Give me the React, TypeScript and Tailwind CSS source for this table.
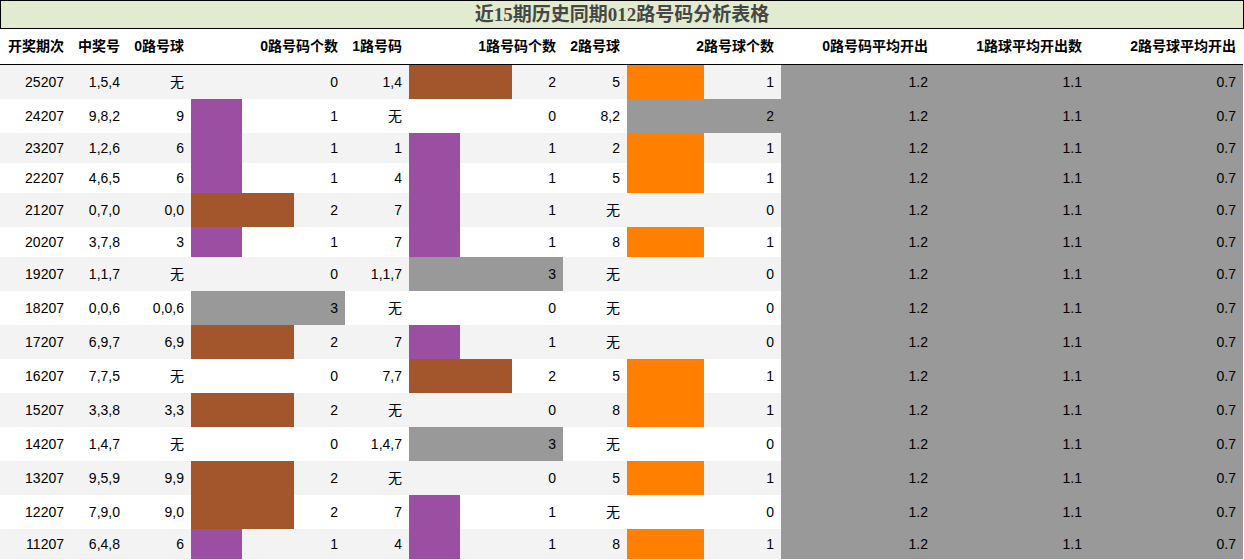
import React from "react";

type Row = {
  qi: string;
  win: string;
  b0: string;
  c0: number;
  b1: string;
  c1: number;
  b2: string;
  c2: number;
};

const rows: Row[] = [
  { qi: "25207", win: "1,5,4", b0: "无", c0: 0, b1: "1,4", c1: 2, b2: "5", c2: 1 },
  { qi: "24207", win: "9,8,2", b0: "9", c0: 1, b1: "无", c1: 0, b2: "8,2", c2: 2 },
  { qi: "23207", win: "1,2,6", b0: "6", c0: 1, b1: "1", c1: 1, b2: "2", c2: 1 },
  { qi: "22207", win: "4,6,5", b0: "6", c0: 1, b1: "4", c1: 1, b2: "5", c2: 1 },
  { qi: "21207", win: "0,7,0", b0: "0,0", c0: 2, b1: "7", c1: 1, b2: "无", c2: 0 },
  { qi: "20207", win: "3,7,8", b0: "3", c0: 1, b1: "7", c1: 1, b2: "8", c2: 1 },
  { qi: "19207", win: "1,1,7", b0: "无", c0: 0, b1: "1,1,7", c1: 3, b2: "无", c2: 0 },
  { qi: "18207", win: "0,0,6", b0: "0,0,6", c0: 3, b1: "无", c1: 0, b2: "无", c2: 0 },
  { qi: "17207", win: "6,9,7", b0: "6,9", c0: 2, b1: "7", c1: 1, b2: "无", c2: 0 },
  { qi: "16207", win: "7,7,5", b0: "无", c0: 0, b1: "7,7", c1: 2, b2: "5", c2: 1 },
  { qi: "15207", win: "3,3,8", b0: "3,3", c0: 2, b1: "无", c1: 0, b2: "8", c2: 1 },
  { qi: "14207", win: "1,4,7", b0: "无", c0: 0, b1: "1,4,7", c1: 3, b2: "无", c2: 0 },
  { qi: "13207", win: "9,5,9", b0: "9,9", c0: 2, b1: "无", c1: 0, b2: "5", c2: 1 },
  { qi: "12207", win: "7,9,0", b0: "9,0", c0: 2, b1: "7", c1: 1, b2: "无", c2: 0 },
  { qi: "11207", win: "6,4,8", b0: "6", c0: 1, b1: "4", c1: 1, b2: "8", c2: 1 },
];

const headers = [
  "开奖期次",
  "中奖号",
  "0路号球",
  "0路号码个数",
  "1路号码",
  "1路号码个数",
  "2路号球",
  "2路号球个数",
  "0路号码平均开出",
  "1路球平均开出数",
  "2路号球平均开出",
];

const gridCols =
  "grid grid-cols-[71px_56px_64px_154px_64px_154px_64px_154px_154px_154px_154px] w-[1243px]";

// 0路 / 1路 bars: 1 purple, 2 brown, 3 grey (max 3)
function barClass012(n: number) {
  if (n === 1) return "bg-[#9b4fa3]";
  if (n === 2) return "bg-[#a3552b]";
  return "bg-[#999999]";
}

// 2路 bars: 1 orange, 2 grey (max 2)
function barClass2(n: number) {
  if (n === 1) return "bg-[#ff8000]";
  return "bg-[#999999]";
}

function Cell({ children }: { children: React.ReactNode }) {
  return <div className="flex items-center justify-end pr-[7px] whitespace-nowrap">{children}</div>;
}

function BarCell({ value, max, color }: { value: number; max: number; color: string }) {
  return (
    <div className="relative flex items-center justify-end pr-[7px]">
      {value > 0 && (
        <div className={`absolute left-0 top-0 bottom-0 ${color}`} style={{ width: `${(value / max) * 100}%` }} />
      )}
      <span className="relative">{value}</span>
    </div>
  );
}

export default function App() {
  return (
    <div className="w-[1244px] h-[560px] bg-white text-[14px] text-black font-['Liberation_Sans','Noto_Sans_CJK_SC',sans-serif] overflow-hidden">
      <div className="h-[29px] border border-black bg-[#e2ebcf] flex items-center justify-center">
        <h1 className="text-[19px] leading-[27px] font-bold text-[#474747] font-['Liberation_Serif','Noto_Sans_CJK_SC',serif]">
          近15期历史同期012路号码分析表格
        </h1>
      </div>

      <div className={`${gridCols} h-[36px] border-b border-black bg-white font-bold text-black`}>
        {headers.map((h) => (
          <Cell key={h}>{h}</Cell>
        ))}
      </div>

      {rows.map((r, i) => {
        const tall = [r.b0, r.b1, r.b2].includes("无");
        return (
          <div
            key={r.qi}
            className={`${gridCols} ${tall ? "h-[34px]" : "h-[30px]"} ${i % 2 === 0 ? "bg-[#f3f3f3]" : "bg-white"}`}
          >
            <Cell>{r.qi}</Cell>
            <Cell>{r.win}</Cell>
            <Cell>{r.b0}</Cell>
            <BarCell value={r.c0} max={3} color={barClass012(r.c0)} />
            <Cell>{r.b1}</Cell>
            <BarCell value={r.c1} max={3} color={barClass012(r.c1)} />
            <Cell>{r.b2}</Cell>
            <BarCell value={r.c2} max={2} color={barClass2(r.c2)} />
            <div className="bg-[#999999] flex items-center justify-end pr-[7px]">1.2</div>
            <div className="bg-[#999999] flex items-center justify-end pr-[7px]">1.1</div>
            <div className="bg-[#999999] flex items-center justify-end pr-[7px]">0.7</div>
          </div>
        );
      })}
    </div>
  );
}
